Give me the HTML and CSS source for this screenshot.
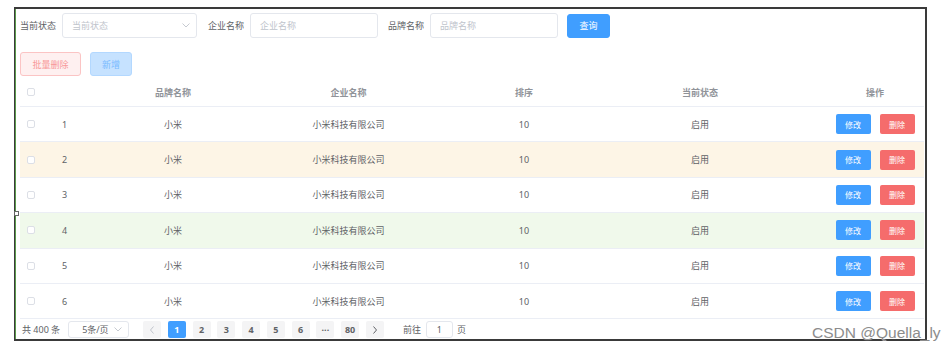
FILE: index.html
```html
<html>

<head>
    <title>品牌管理</title>
    <link rel="stylesheet" href="styles.css">
</head>

<body>
    <div class="frame">
        <span class="handle"></span>

        <!-- 搜索栏 -->
        <div class="search-bar">
            <label class="label">当前状态</label>
            <div class="select wide">
                <span class="placeholder">当前状态</span>
                <svg class="chev" width="8" height="5" viewBox="0 0 8 5"><path d="M0.5 0.5L4 4L7.5 0.5" fill="none" stroke="#c0c4cc" stroke-width="0.9" /></svg>
            </div>
            <label class="label">企业名称</label>
            <div class="input"><span class="placeholder">企业名称</span></div>
            <label class="label">品牌名称</label>
            <div class="input"><span class="placeholder">品牌名称</span></div>
            <button class="btn primary">查询</button>
        </div>

        <!-- 操作按钮 -->
        <div class="tool-bar">
            <button class="btn danger-plain">批量删除</button>
            <button class="btn primary-light">新增</button>
        </div>

        <!-- 表格 -->
        <div class="table">
            <div class="row head">
                <div class="cell check"><span class="box"></span></div>
                <div class="cell idx"></div>
                <div class="cell">品牌名称</div>
                <div class="cell">企业名称</div>
                <div class="cell">排序</div>
                <div class="cell">当前状态</div>
                <div class="cell ops">操作</div>
            </div>
            <div class="row">
                <div class="cell check"><span class="box"></span></div>
                <div class="cell idx">1</div>
                <div class="cell">小米</div>
                <div class="cell">小米科技有限公司</div>
                <div class="cell">10</div>
                <div class="cell">启用</div>
                <div class="cell ops"><button class="mini edit">修改</button><button class="mini del">删除</button></div>
            </div>
            <div class="row warning">
                <div class="cell check"><span class="box"></span></div>
                <div class="cell idx">2</div>
                <div class="cell">小米</div>
                <div class="cell">小米科技有限公司</div>
                <div class="cell">10</div>
                <div class="cell">启用</div>
                <div class="cell ops"><button class="mini edit">修改</button><button class="mini del">删除</button></div>
            </div>
            <div class="row">
                <div class="cell check"><span class="box"></span></div>
                <div class="cell idx">3</div>
                <div class="cell">小米</div>
                <div class="cell">小米科技有限公司</div>
                <div class="cell">10</div>
                <div class="cell">启用</div>
                <div class="cell ops"><button class="mini edit">修改</button><button class="mini del">删除</button></div>
            </div>
            <div class="row success">
                <div class="cell check"><span class="box"></span></div>
                <div class="cell idx">4</div>
                <div class="cell">小米</div>
                <div class="cell">小米科技有限公司</div>
                <div class="cell">10</div>
                <div class="cell">启用</div>
                <div class="cell ops"><button class="mini edit">修改</button><button class="mini del">删除</button></div>
            </div>
            <div class="row">
                <div class="cell check"><span class="box"></span></div>
                <div class="cell idx">5</div>
                <div class="cell">小米</div>
                <div class="cell">小米科技有限公司</div>
                <div class="cell">10</div>
                <div class="cell">启用</div>
                <div class="cell ops"><button class="mini edit">修改</button><button class="mini del">删除</button></div>
            </div>
            <div class="row">
                <div class="cell check"><span class="box"></span></div>
                <div class="cell idx">6</div>
                <div class="cell">小米</div>
                <div class="cell">小米科技有限公司</div>
                <div class="cell">10</div>
                <div class="cell">启用</div>
                <div class="cell ops"><button class="mini edit">修改</button><button class="mini del">删除</button></div>
            </div>
        </div>

        <!-- 分页 -->
        <div class="pager">
            <span class="total">共 400 条</span>
            <div class="select sizes">
                <span>5条/页</span>
                <svg class="chev" width="8" height="5" viewBox="0 0 8 5"><path d="M0.5 0.5L4 4L7.5 0.5" fill="none" stroke="#c0c4cc" stroke-width="0.9" /></svg>
            </div>
            <ul class="pages">
                <li class="page off">
                    <svg width="6" height="8" viewBox="0 0 6 8"><path d="M4.5 0.5L1.5 4L4.5 7.5" fill="none" stroke="#c0c4cc" stroke-width="1" /></svg>
                </li>
                <li class="page active">1</li>
                <li class="page">2</li>
                <li class="page">3</li>
                <li class="page">4</li>
                <li class="page">5</li>
                <li class="page">6</li>
                <li class="page">&middot;&middot;&middot;</li>
                <li class="page">80</li>
                <li class="page">
                    <svg width="6" height="8" viewBox="0 0 6 8"><path d="M1.5 0.5L4.5 4L1.5 7.5" fill="none" stroke="#606266" stroke-width="1" /></svg>
                </li>
            </ul>
            <span class="jump">前往</span>
            <div class="jump-input">1</div>
            <span class="jump-end">页</span>
        </div>
    </div>

    <div class="watermark">CSDN @Quella_ly</div>
</body>

</html>
```

FILE: styles.css
```css
* {
    box-sizing: border-box;
    margin: 0;
    padding: 0;
}

body {
    background: #ffffff;
    font-family: "Noto Sans", "Noto Sans CJK SC", sans-serif;
    font-size: 9px;
    color: #606266;
    position: relative;
    width: 947px;
    height: 354px;
    overflow: hidden;
}

.frame {
    position: relative;
    margin: 7px 0 0 14px;
    width: 913px;
    height: 334px;
    border: 2px solid #3a3a3a;
    border-left: 1px solid #3a3a3a;
    box-shadow: inset 1px 0 0 #5a9a4a;
    padding: 4px 1px 0 5px;
}

/* 左侧拖拽点 */
.handle {
    position: absolute;
    left: -1px;
    top: 202px;
    width: 5px;
    height: 5px;
    background: #fff;
    border: 1px solid #666;
}

/* 搜索栏 */
.search-bar {
    display: flex;
    align-items: center;
    height: 25px;
}

.label {
    margin-right: 6px;
    white-space: nowrap;
}

.select,
.input {
    display: flex;
    align-items: center;
    height: 25px;
    border: 1px solid #e4e7ed;
    border-radius: 3px;
    padding-left: 9px;
    margin-right: 10px;
    background: #fff;
}

.select.wide {
    width: 135px;
    justify-content: space-between;
    padding-right: 6px;
    margin-right: 11px;
}

.input {
    width: 128px;
}

.placeholder {
    color: #c0c4cc;
}

.btn {
    font-family: inherit;
    font-size: 9px;
    height: 24px;
    border-radius: 3px;
    border: 1px solid transparent;
}

.primary {
    width: 43px;
    background: #409eff;
    border-color: #409eff;
    color: #ffffff;
    margin-left: -1px;
}

.tool-bar {
    display: flex;
    gap: 9px;
    margin-top: 14px;
}

.danger-plain {
    width: 61px;
    background: #fef0f0;
    border-color: #fbc4c4;
    color: #f89898;
}

.primary-light {
    width: 42px;
    background: #c6e2ff;
    border-color: #b3d8ff;
    color: #79bbff;
}

/* 表格 */
.table {
    margin-top: 6px;
}

.row {
    display: grid;
    grid-template-columns: 30px 35px 176px 175px 176px 176px 1fr;
    height: 35.4px;
    border-bottom: 1px solid #ebeef5;
}

.row.head {
    height: 25px;
    color: #909399;
    font-weight: bold;
}

.row.warning {
    background: #fdf5e6;
}

.row.success {
    background: #f0f9eb;
}

.cell {
    display: flex;
    align-items: center;
    justify-content: center;
    white-space: nowrap;
}

.row.head .cell {
    padding-bottom: 4px;
}

.cell.check {
    justify-content: flex-start;
    padding-left: 7px;
}

.cell.idx {
    justify-content: flex-start;
    padding-left: 12px;
}

.box {
    width: 8px;
    height: 8px;
    border: 1px solid #dcdfe6;
    border-radius: 2px;
    background: #fff;
}

.cell.ops {
    padding-left: 38px;
    gap: 9px;
}

.mini {
    width: 35px;
    height: 20px;
    border: none;
    border-radius: 2px;
    color: #fff;
    font-family: inherit;
    font-size: 8px;
}

.mini.edit {
    background: #409eff;
}

.mini.del {
    background: #f56c6c;
}

/* 分页 */
.pager {
    display: flex;
    align-items: center;
    height: 19px;
    padding-left: 2px;
    margin-top: 1px;
}

.total {
    margin-right: 8px;
}

.select.sizes {
    width: 61px;
    height: 17px;
    padding-left: 13px;
    padding-right: 6px;
    justify-content: space-between;
    margin-right: 14px;
}

.pages {
    list-style: none;
    display: flex;
    gap: 6.75px;
}

.page {
    width: 18px;
    height: 17px;
    background: #f4f4f5;
    border-radius: 2px;
    display: flex;
    align-items: center;
    justify-content: center;
    font-weight: bold;
    color: #606266;
}

.page.active {
    background: #409eff;
    color: #fff;
}

.jump {
    margin-left: 19px;
    margin-right: 5px;
}

.jump-input {
    width: 27px;
    height: 17px;
    border: 1px solid #e4e7ed;
    border-radius: 3px;
    display: flex;
    align-items: center;
    justify-content: center;
    margin-right: 4px;
}

/* 水印 */
.watermark {
    position: absolute;
    left: 812px;
    top: 324px;
    font-family: "Liberation Sans", sans-serif;
    font-size: 15.5px;
    color: #8c8c8c;
    text-shadow: 0 0 1px #fff;
}
```
